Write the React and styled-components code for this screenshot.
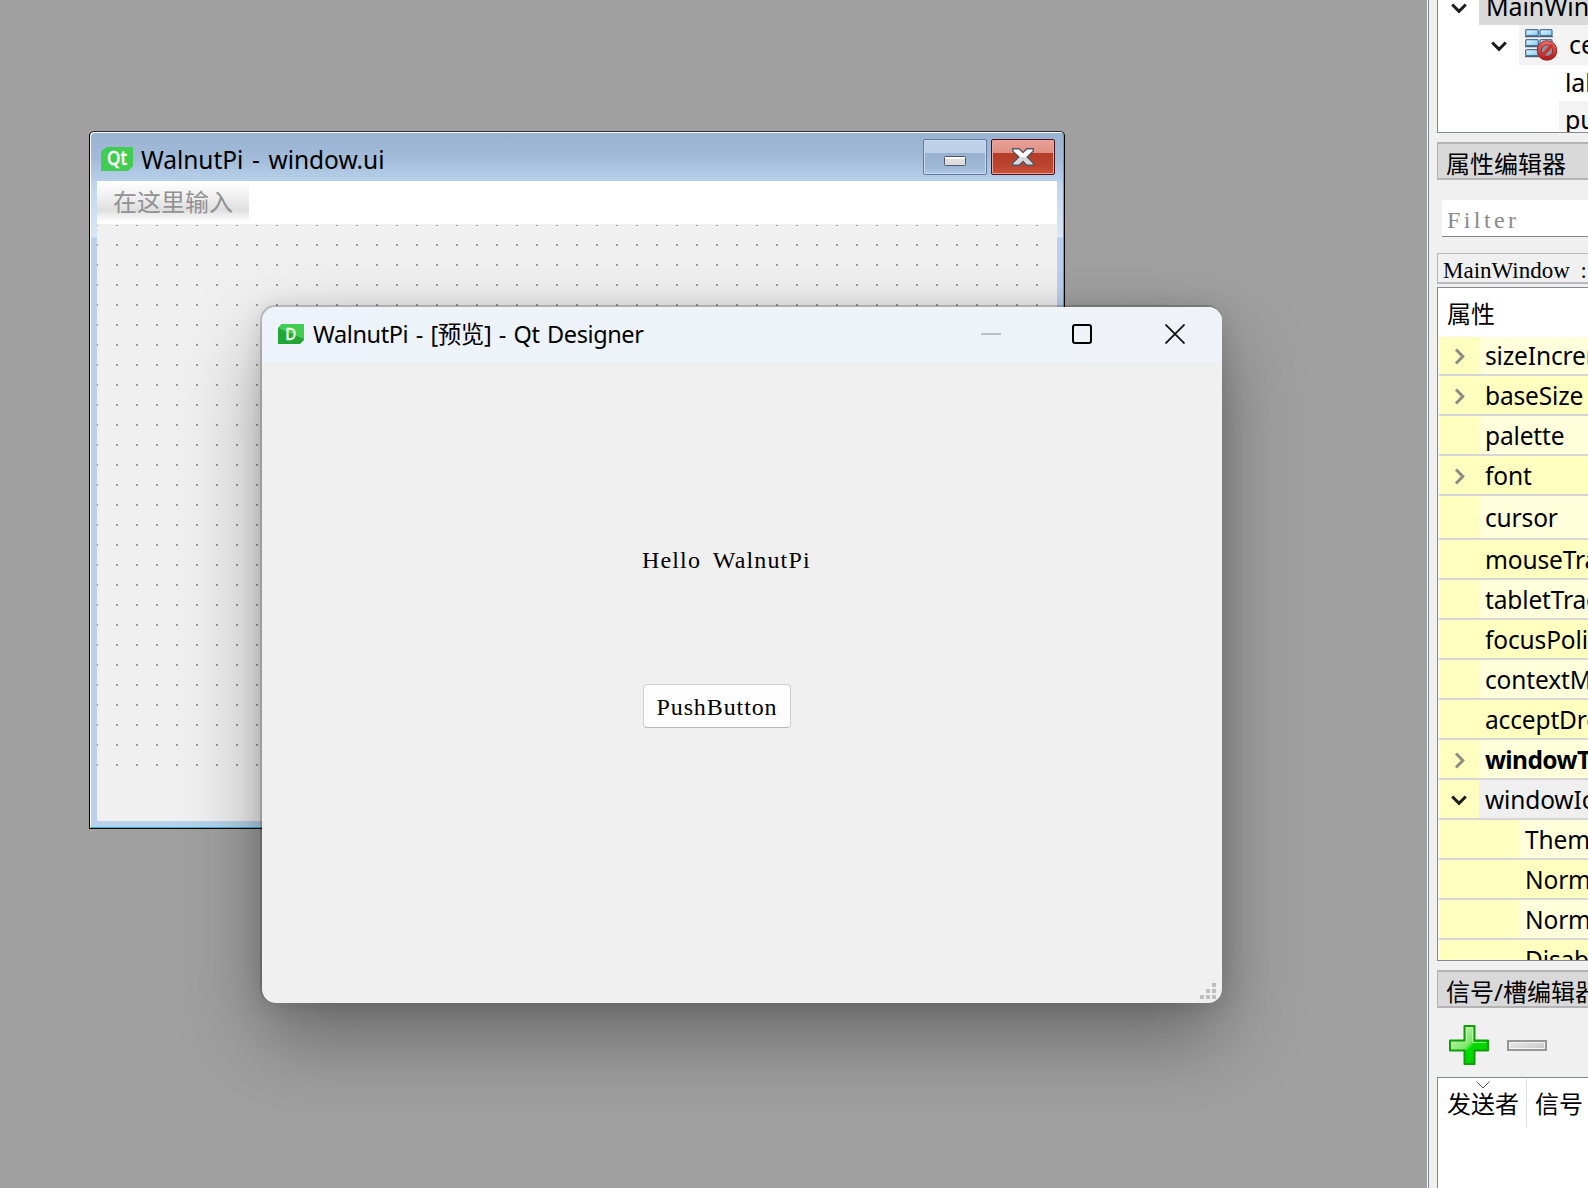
import React from "react";
import styled, { createGlobalStyle, css } from "styled-components";

const sans = `"Noto Sans", "Open Sans", "Noto Sans CJK SC", sans-serif`;
const serif = `"Liberation Serif", "Noto Sans CJK SC", serif`;

const GlobalStyle = createGlobalStyle`
  * { box-sizing: border-box; }
  body { margin: 0; background: #a0a0a0; color: #000; font-family: ${sans}; overflow: hidden; }
`;

const Screen = styled.div`
  display: flex;
  width: 1588px;
  height: 1188px;
  overflow: hidden;
`;

const Workspace = styled.main`
  position: relative;
  flex: 0 0 1428px;
  overflow: hidden;
  background: #a0a0a0;
`;

/* Form window */
const FormWindow = styled.section`
  position: absolute;
  left: 89px;
  top: 131px;
  width: 976px;
  height: 698px;
  display: flex;
  flex-direction: column;
  border: 1px solid #000;
  border-top-color: #2b2f35;
  border-radius: 5px 5px 0 0;
  box-shadow: inset 1px 1px 0 #fff, inset -1px -1px 0 #35b4d4;
  background: linear-gradient(#98b3d0 0, #a1bad7 25px, #b7d0ea 49px, #c0d5ed 51px, #dae7f5 105px, #b9d1ea 106px);
  padding: 0 7px 7px;
`;

const FormTitle = styled.header`
  display: flex;
  align-items: flex-start;
  height: 49px;
  flex: none;
  padding: 7px 2px 0 4px;
`;

const FormCaption = styled.h1`
  flex: 1;
  margin: 4px 0 0 8px;
  font: 400 24.5px/34px ${sans};
  letter-spacing: -0.05px;
  word-spacing: 2.4px;
  white-space: nowrap;
`;

const IconSlot = styled.span`
  display: flex;
  flex: none;
  margin-top: ${(p) => p.$top || 0}px;
`;

const AeroButton = styled.button`
  display: flex;
  align-items: center;
  justify-content: center;
  width: 64px;
  height: 36px;
  margin-left: ${(p) => (p.$close ? 4 : 0)}px;
  padding: 0;
  border-radius: 2px;
  ${(p) =>
    p.$close
      ? css`
          border: 1px solid #4b0f19;
          box-shadow: inset 0 0 0 1px #eba59b;
          background: linear-gradient(#e9a097 0, #df9184 13px, #b33d27 13px, #ba4530 26px, #ca513c 100%);
        `
      : css`
          border: 1px solid #63779b;
          box-shadow: inset 0 0 0 1px #c9dcf0;
          background: linear-gradient(#bed3e9 0, #bcd1e7 13px, #98b1ce 13px, #9eb8d5 28px, #b4cde8 100%);
        `}
`;

const MenuBar = styled.nav`
  flex: none;
  display: flex;
  height: 43px;
  background: #fff;
`;

const MenuHint = styled.span`
  width: 152px;
  height: 40px;
  padding-left: 16px;
  background: linear-gradient(#fff 0, #f0f0f0 40%, #dfdfdf 72%, #fcfcfc 100%);
  color: #929292;
  font: 400 24px/40px "Noto Sans CJK SC", sans-serif;
  white-space: nowrap;
`;

const FormBody = styled.div`
  flex: 1;
  padding-top: 1px;
  background: #f0f0f0;
`;

const DotGrid = styled.div`
  width: 950px;
  height: 545px;
  background: conic-gradient(from 270deg at 2px 2px, #9c9c9c 25%, transparent 0) -1px -1px / 20px 20px;
`;

/* Preview window */
const Preview = styled.section`
  position: absolute;
  left: 262px;
  top: 307px;
  width: 960px;
  height: 696px;
  display: flex;
  flex-direction: column;
  border-radius: 14px;
  background: #f0f0f0;
  box-shadow: -1px -1px 0 1px rgba(0, 0, 0, 0.16), 0 2px 24px rgba(0, 0, 0, 0.14), 0 36px 80px rgba(0, 0, 0, 0.34);
`;

const PreviewTitle = styled.header`
  display: flex;
  flex: none;
  height: 56px;
  align-items: flex-start;
  padding-left: 16px;
  border-radius: 14px 14px 0 0;
  background: linear-gradient(90deg, #eef3fb, #edf3f8 50%, #eff3f8);
`;

const PreviewCaption = styled.h2`
  width: 668px;
  margin: 10px 0 0 9px;
  font: 400 23.5px/34px ${sans};
  letter-spacing: -0.4px;
  word-spacing: 1.8px;
  white-space: nowrap;
`;

const Caption = styled.button`
  width: 20px;
  height: 20px;
  display: flex;
  padding: 0;
  margin: 17px ${(p) => p.$gap || 0}px 0 0;
  border: 0;
  background: none;
`;

const PreviewBody = styled.div`
  flex: 1;
  display: flex;
  flex-direction: column;
  align-items: flex-start;
  padding: 182px 5px 4px 380px;
`;

const Label = styled.p`
  margin: 0;
  font: 400 24px/30px ${serif};
  letter-spacing: 1.15px;
  word-spacing: 5px;
  white-space: nowrap;
`;

const PushButton = styled.button`
  width: 148px;
  height: 44px;
  margin: 109px 0 0 1px;
  padding: 1px 0 0;
  border: 1px solid #d0d0d0;
  border-bottom-color: #b9b9b9;
  border-radius: 4px;
  background: #fdfdfd;
  color: #000;
  font: 400 24px/34px ${serif};
  letter-spacing: 0.9px;
`;

const Grip = styled.div`
  display: grid;
  grid-template-columns: repeat(3, 4px);
  gap: 2px;
  margin: auto 1px 0 auto;
`;

const GripDot = styled.i`
  width: 4px;
  height: 4px;
  background: ${(p) => (p.$on ? "#bfbfbf" : "transparent")};
`;

/* Dock column */
const Dock = styled.aside`
  flex: 0 0 160px;
  display: flex;
  flex-direction: column;
  padding-left: 8px;
  border-left: 1px solid #7c838e;
  box-shadow: -1px 0 0 #fff;
  z-index: 1;
  background: #f0f0f0;
  overflow: hidden;
`;

const Tree = styled.div`
  flex: none;
  height: 133px;
  margin-bottom: 9px;
  overflow: hidden;
  border: solid #828790;
  border-width: 0 0 1px 1px;
  background: #fff;
`;

const TreeRow = styled.div`
  display: flex;
  height: ${(p) => p.$h}px;
  padding-left: ${(p) => p.$indent}px;
`;

const TreeArrow = styled.span`
  width: 28px;
  flex: none;
  margin-top: ${(p) => p.$top}px;
  line-height: 0;
`;

const TreeCell = styled.span`
  display: flex;
  flex: 0 0 220px;
  padding-left: ${(p) => p.$pad}px;
  background: ${(p) => p.$bg};
  font: 400 25px/${(p) => p.$line}px ${sans};
  letter-spacing: -0.1px;
  white-space: nowrap;
`;

const DockTitle = styled.h3`
  flex: none;
  height: 38px;
  margin: 0;
  padding-left: 8px;
  border: solid #b4b4b4;
  border-width: 2px 0 2px 1px;
  background: #d9d9d9;
  font: 400 24px/40px ${sans};
  white-space: nowrap;
`;

const Filter = styled.div`
  flex: none;
  height: 37px;
  margin: 20px 0 16px 5px;
  padding-left: 5px;
  border-bottom: 1px solid #868686;
  background: #fff;
  color: #8a8a8a;
  font: 400 24px/40px ${serif};
  letter-spacing: 3.4px;
`;

const ObjectName = styled.div`
  flex: none;
  height: 31px;
  margin-bottom: 3px;
  padding-left: 5px;
  border: solid #b8b8b8;
  border-width: 1px 0 2px 1px;
  font: 400 23px/33px ${serif};
  word-spacing: 5px;
  white-space: pre;
`;

const Properties = styled.div`
  flex: none;
  height: 674px;
  margin-bottom: 9px;
  padding-left: 1px;
  overflow: hidden;
  border: solid #828790;
  border-width: 1px 0 1px 1px;
  background: #fff;
`;

const PropertiesHead = styled.div`
  height: 49px;
  padding-left: 8px;
  font: 400 24px/51px ${sans};
`;

const PropertyRow = styled.div`
  display: flex;
  height: ${(p) => p.$h}px;
  border-bottom: 2px solid #d6d6d6;
  background: #ffffbf;
`;

const PropertyGutter = styled.span`
  flex: 0 0 ${(p) => (p.$child ? 80 : 40)}px;
  display: flex;
  align-items: center;
  padding: 2px 0 0 ${(p) => (p.$open ? 12 : 15)}px;
`;

const PropertyName = styled.span`
  flex: 0 0 200px;
  display: flex;
  align-items: center;
  padding: 1px 0 0 6px;
  background: ${(p) => p.$bg};
  font: ${(p) => (p.$bold ? 700 : 400)} 24.5px/36px ${sans};
  letter-spacing: ${(p) => (p.$bold ? -0.6 : -0.15)}px;
`;

const Tools = styled.div`
  flex: none;
  display: flex;
  align-items: center;
  gap: 18px;
  height: 69px;
  padding: 5px 0 0 12px;
`;

const Signals = styled.div`
  flex: 1;
  display: flex;
  align-items: flex-start;
  padding-top: 1px;
  border: solid #828790;
  border-width: 1px 0 0 1px;
  background: #fff;
`;

const SignalHead = styled.div`
  flex: none;
  display: flex;
  flex-direction: column;
  width: ${(p) => p.$w}px;
  height: 48px;
  padding: 2px 0 0 ${(p) => p.$pad}px;
  border-right: 1px solid #dedede;
  font: 400 24px/28px ${sans};
  white-space: nowrap;
`;

const SortMark = styled.span`
  display: flex;
  justify-content: center;
  height: 9px;
  margin-right: 8px;
`;

const ChevronDown = () => (
  <svg width="16" height="11" viewBox="0 0 16 11" fill="none" stroke="#1c1c1c" strokeWidth="3">
    <path d="M1.2 1.5 8 8.3l6.8-6.8" />
  </svg>
);

const ChevronRight = () => (
  <svg width="12" height="17" viewBox="0 0 12 17" fill="none" stroke="#8c8c84" strokeWidth="3">
    <path d="m2 1.5 6.8 7L2 15.5" />
  </svg>
);

const glyph = { fontFamily: sans };

const QtIcon = () => (
  <svg width="32" height="24" viewBox="0 0 32 24">
    <path d="M5 0h27v19l-5 5H0V5z" fill="#41cd52" />
    <text x="6" y="18" textLength="20" lengthAdjust="spacingAndGlyphs" fontSize="19.5" fontWeight="500" fill="#fff" stroke="#fff" strokeWidth=".4" style={glyph}>Qt</text>
  </svg>
);

const DesignerIcon = () => (
  <svg width="26" height="20" viewBox="0 0 26 20">
    <path d="M4 0h22v16l-4 4H0V4z" fill="#21a635" />
    <path d="M4 0h22v15L0 4z" fill="#41cd52" />
    <text x="7.2" y="16" textLength="11" lengthAdjust="spacingAndGlyphs" fontSize="16.5" fontWeight="500" fill="#eaffea" stroke="#eaffea" strokeWidth=".4" style={glyph}>D</text>
  </svg>
);

const AeroMinimize = () => (
  <svg width="22" height="10" viewBox="0 0 22 10" style={{ marginTop: 8 }}>
    <rect x=".5" y=".5" width="21" height="9" rx="1" fill="#dedede" stroke="#535666" />
    <path d="M1 2h20" stroke="#fff" strokeWidth="2" />
  </svg>
);

const AeroClose = () => (
  <svg width="22" height="18" viewBox="0 0 22 18">
    <defs>
      <linearGradient id="cross" x2="0" y2="1">
        <stop offset=".5" stopColor="#fff" />
        <stop offset=".5" stopColor="#d9d9d9" />
      </linearGradient>
    </defs>
    <path d="M.7.7h6.5L11 4.6 14.8.7h6.5v2.2L15.2 9l6.1 6.1v2.2h-6.5L11 13.4l-3.8 3.9H.7v-2.2L6.8 9 .7 2.9z" fill="url(#cross)" stroke="#535666" strokeWidth="1.4" />
  </svg>
);

const LayoutIcon = () => (
  <svg width="32" height="32" viewBox="0 0 32 32">
    <defs>
      <linearGradient id="brick" x2="1" y2="1">
        <stop offset="0" stopColor="#e8fcff" />
        <stop offset="1" stopColor="#79c8ec" />
      </linearGradient>
      <linearGradient id="ban" x2="0" y2="1">
        <stop offset="0" stopColor="#e06a62" />
        <stop offset="1" stopColor="#b51d1d" />
      </linearGradient>
    </defs>
    {[0, 10, 20].map((y) => (
      <g key={y} fill="url(#brick)" stroke="#50719a" strokeWidth="1.3">
        <rect x=".7" y={y + 0.7} width="12.6" height="6" rx="1" />
        {y < 20 && <rect x="15" y={y + 0.7} width="12" height="6" rx="1" />}
      </g>
    ))}
    <path d="M0 7.6h28M0 17.6h20M0 27.6h14" stroke="#50607b" strokeWidth="1.4" />
    <circle cx="22" cy="21.5" r="7.8" fill="#8995a5" stroke="#9c2020" strokeWidth="5" />
    <circle cx="22" cy="21.5" r="7.8" fill="none" stroke="url(#ban)" strokeWidth="3.4" />
    <path d="m16.8 27 10.4-11" stroke="#c8322f" strokeWidth="3.4" />
  </svg>
);

const PlusIcon = () => (
  <svg width="40" height="40" viewBox="0 0 40 40">
    <defs>
      <linearGradient id="plus" x2="1" y2="1">
        <stop offset=".1" stopColor="#c9f7b9" />
        <stop offset=".48" stopColor="#7be866" />
        <stop offset=".56" stopColor="#00dc00" />
        <stop offset="1" stopColor="#00c800" />
      </linearGradient>
    </defs>
    <path d="M15.500 1h10v14.500H39v10H25.500V39h-10V25.500H1v-10h14.500z" fill="url(#plus)" stroke="#119c0b" strokeWidth="2" strokeLinejoin="round" />
    <path d="M17.500 17V3h6v14.500H37" fill="none" stroke="#d8fbd0" strokeOpacity=".6" />
  </svg>
);

const MinusIcon = () => (
  <svg width="40" height="11" viewBox="0 0 40 11">
    <defs>
      <linearGradient id="minus" x2="1" y2="1">
        <stop offset="0" stopColor="#ececec" />
        <stop offset="1" stopColor="#c4c4c4" />
      </linearGradient>
    </defs>
    <rect x="1" y="1" width="38" height="9" fill="url(#minus)" stroke="#979797" strokeWidth="2" />
    <rect x="2.500" y="2.500" width="35" height="6" fill="none" stroke="#f2f2f2" />
  </svg>
);

const properties = [
  { name: "sizeIncrement", arrow: "right", h: 39 },
  { name: "baseSize", arrow: "right" },
  { name: "palette" },
  { name: "font", arrow: "right" },
  { name: "cursor", h: 44 },
  { name: "mouseTracking" },
  { name: "tabletTracking" },
  { name: "focusPolicy" },
  { name: "contextMenuPolicy" },
  { name: "acceptDrops" },
  { name: "windowTitle", arrow: "right", bold: true },
  { name: "windowIcon", arrow: "down", selected: true },
  { name: "Theme", child: true },
  { name: "Normal Off", child: true },
  { name: "Normal On", child: true },
  { name: "Disabled Off", child: true },
];

const rowColor = (row, i) => {
  if (row.selected) return "#efefef";
  return i % 2 === 0 ? "#ffffdc" : "#ffffbf";
};

export default function App() {
  return (
    <Screen>
      <GlobalStyle />
      <Workspace>
        <FormWindow>
          <FormTitle>
            <IconSlot $top={8}><QtIcon /></IconSlot>
            <FormCaption>WalnutPi - window.ui</FormCaption>
            <AeroButton aria-label="Minimize"><AeroMinimize /></AeroButton>
            <AeroButton $close aria-label="Close"><AeroClose /></AeroButton>
          </FormTitle>
          <MenuBar><MenuHint>在这里输入</MenuHint></MenuBar>
          <FormBody><DotGrid /></FormBody>
        </FormWindow>
        <Preview>
          <PreviewTitle>
            <IconSlot $top={17}><DesignerIcon /></IconSlot>
            <PreviewCaption>WalnutPi - [预览] - Qt Designer</PreviewCaption>
            <Caption $gap={71} aria-label="Minimize">
              <svg width="20" height="20"><path d="M0 10h20" stroke="#bcc1c6" strokeWidth="2" /></svg>
            </Caption>
            <Caption $gap={73} aria-label="Maximize">
              <svg width="20" height="20"><rect x="1" y="1" width="18" height="18" rx="2" fill="none" stroke="#000" strokeWidth="2" /></svg>
            </Caption>
            <Caption aria-label="Close">
              <svg width="20" height="20"><path d="m.5.5 19 19m0-19-19 19" stroke="#111" strokeWidth="1.8" /></svg>
            </Caption>
          </PreviewTitle>
          <PreviewBody>
            <Label>Hello WalnutPi</Label>
            <PushButton>PushButton</PushButton>
            <Grip>
              {[0, 0, 1, 0, 1, 1, 1, 1, 1].map((on, i) => <GripDot key={i} $on={on} />)}
            </Grip>
          </PreviewBody>
        </Preview>
      </Workspace>
      <Dock>
        <Tree>
          <TreeRow $h={25} $indent={13}>
            <TreeArrow $top={3}><ChevronDown /></TreeArrow>
            <TreeCell $pad={7} $bg="#d9d9d9" $line={12}>MainWindow</TreeCell>
          </TreeRow>
          <TreeRow $h={40} $indent={53}>
            <TreeArrow $top={16}><ChevronDown /></TreeArrow>
            <TreeCell $pad={6} $bg="#f3f3f3" $line={38}>
              <IconSlot $top={4}><LayoutIcon /></IconSlot>
              <TreeCell as="span" $pad={12} $bg="transparent" $line={38}>centralwidget</TreeCell>
            </TreeCell>
          </TreeRow>
          <TreeRow $h={36} $indent={121}>
            <TreeCell $pad={6} $bg="#fff" $line={34}>label</TreeCell>
          </TreeRow>
          <TreeRow $h={30} $indent={121}>
            <TreeCell $pad={6} $bg="#f3f3f3" $line={36}>pushButton</TreeCell>
          </TreeRow>
        </Tree>
        <DockTitle>属性编辑器</DockTitle>
        <Filter>Filter</Filter>
        <ObjectName>MainWindow : QMainWindow</ObjectName>
        <Properties>
          <PropertiesHead>属性</PropertiesHead>
          {properties.map((row, i) => (
            <PropertyRow key={row.name} $h={row.h || 40}>
              <PropertyGutter $child={row.child} $open={row.arrow === "down"}>
                {row.arrow === "right" && <ChevronRight />}
                {row.arrow === "down" && <ChevronDown />}
              </PropertyGutter>
              <PropertyName $bold={row.bold} $bg={rowColor(row, i)}>{row.name}</PropertyName>
            </PropertyRow>
          ))}
        </Properties>
        <DockTitle>信号/槽编辑器</DockTitle>
        <Tools><PlusIcon /><MinusIcon /></Tools>
        <Signals>
          <SignalHead $w={89} $pad={9}>
            <SortMark>
              <svg width="14" height="8" fill="none" stroke="#555"><path d="m.5.5 6.500 6.500L13.500.5" /></svg>
            </SortMark>
            发送者
          </SignalHead>
          <SignalHead $w={120} $pad={8}>
            <SortMark />
            信号
          </SignalHead>
        </Signals>
      </Dock>
    </Screen>
  );
}
